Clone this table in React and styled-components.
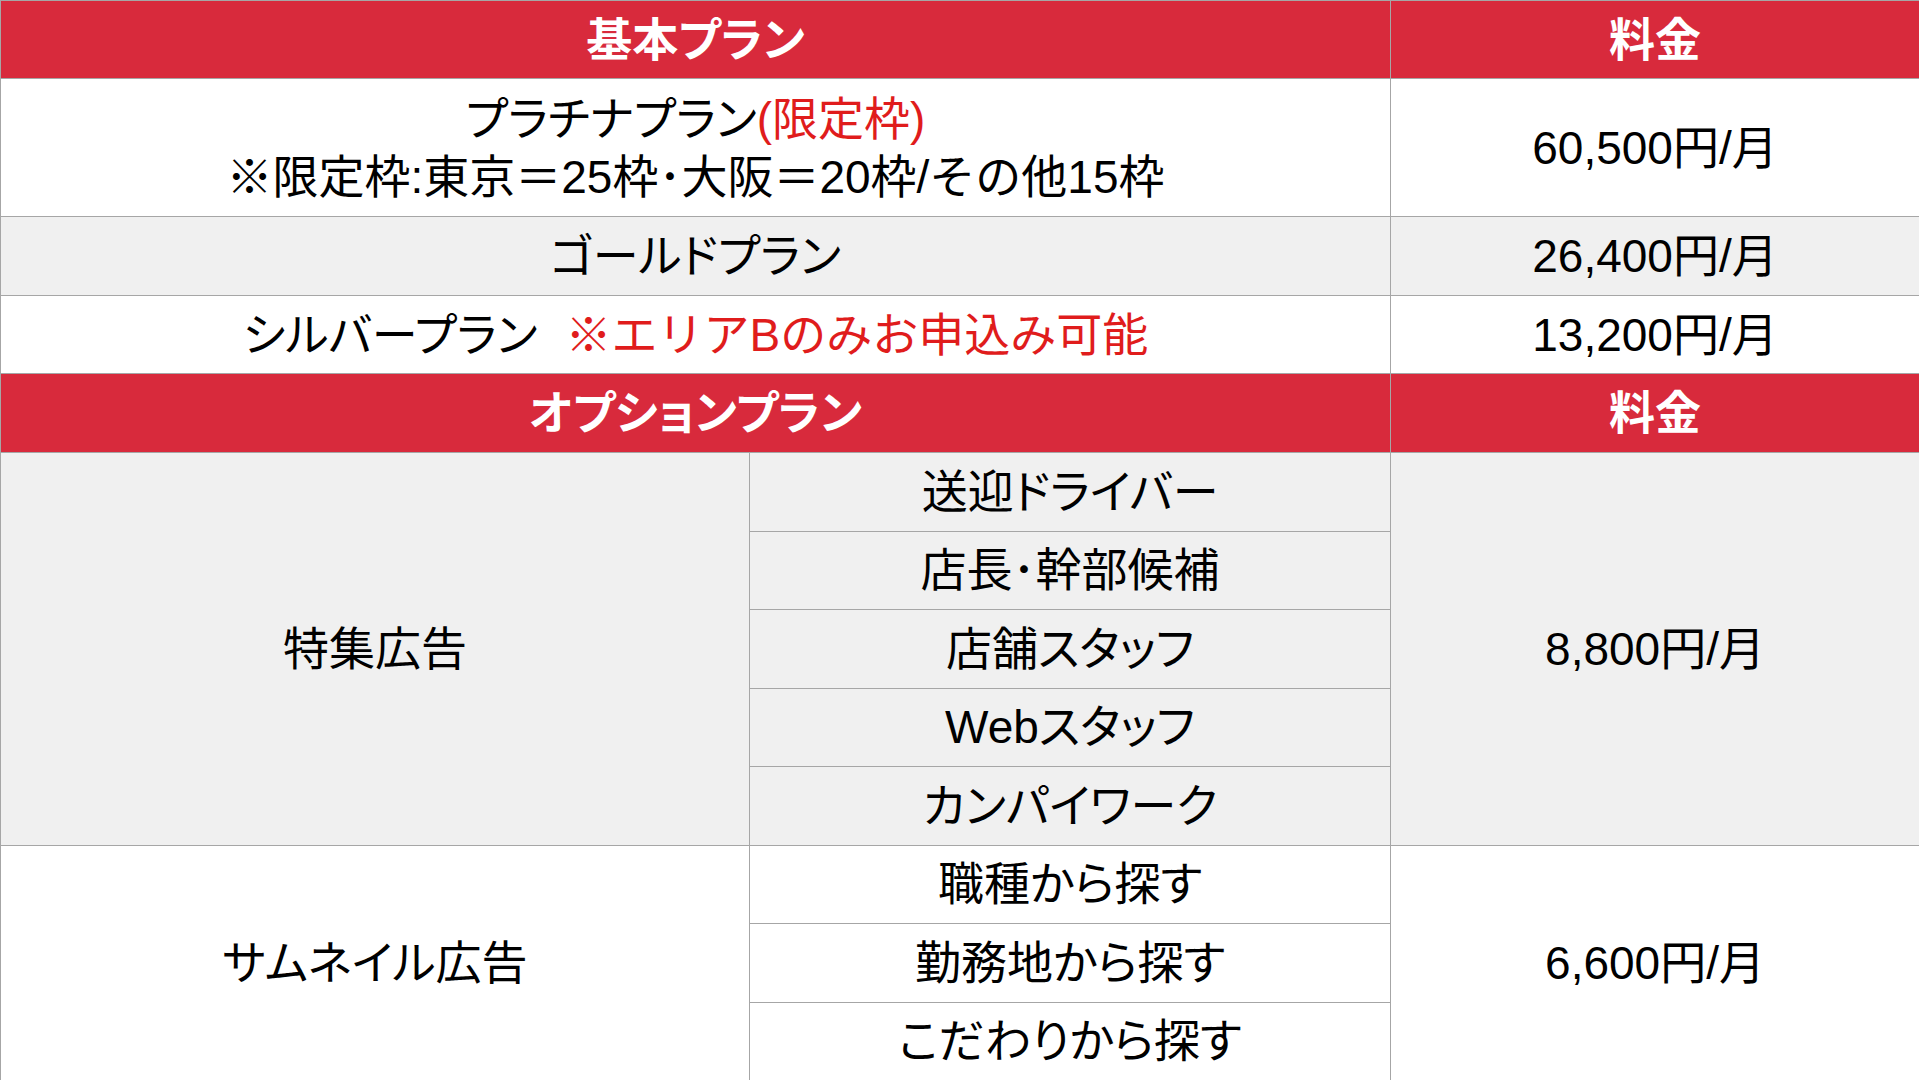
import React from 'react';
import styled, { createGlobalStyle } from 'styled-components';

const GlobalStyle = createGlobalStyle`
  html, body {
    margin: 0;
    padding: 0;
    background: #fff;
  }
  body {
    font-family: "Liberation Sans", "Noto Sans CJK JP", sans-serif;
    overflow: hidden;
  }
`;

const Table = styled.div`
  width: 1919px;
  height: 1080px;
  box-sizing: border-box;
  border-top: 1px solid #a6a6a6;
  border-left: 1px solid #a6a6a6;
  background: #a6a6a6;
  display: grid;
  grid-template-columns: 748px 640px 1fr;
  grid-template-rows: 77px 137px 78px 77px 78px repeat(8, 1fr);
  gap: 1px;
`;

const Cell = styled.div`
  grid-column: ${p => p.$col || 'auto'};
  grid-row: ${p => p.$row || 'auto'};
  background: ${p => (p.$head ? '#d82a3c' : p.$shade ? '#f0f0f0' : '#fff')};
  color: ${p => (p.$head ? '#fff' : '#000')};
  font-weight: ${p => (p.$head ? 700 : 400)};
  font-size: 46px;
  font-feature-settings: "palt";
  display: flex;
  flex-direction: column;
  align-items: center;
  justify-content: center;
  text-align: center;
  line-height: 58px;
  white-space: nowrap;
`;

const Price = styled(Cell)`
  font-feature-settings: normal;
`;

const Line = styled.div`
  font-feature-settings: ${p => (p.$wide ? 'normal' : '"palt"')};
`;

const Red = styled.span`
  color: #e01c1c;
`;

const Note = styled(Red)`
  margin-left: 28px;
  font-feature-settings: normal;
`;

const featureItems = ['送迎ドライバー', '店長･幹部候補', '店舗スタッフ', 'Webスタッフ', 'カンパイワーク'];
const thumbItems = ['職種から探す', '勤務地から探す', 'こだわりから探す'];

export default function App() {
  return (
    <>
      <GlobalStyle />
      <Table>
        <Cell $head $col="1 / 3" $row="1">基本プラン</Cell>
        <Cell $head $col="3" $row="1">料金</Cell>

        <Cell $col="1 / 3" $row="2">
          <Line>
            プラチナプラン<Red>(限定枠)</Red>
          </Line>
          <Line $wide>※限定枠:東京＝25枠･大阪＝20枠/その他15枠</Line>
        </Cell>
        <Price $col="3" $row="2">60,500円/月</Price>

        <Cell $shade $col="1 / 3" $row="3">ゴールドプラン</Cell>
        <Price $shade $col="3" $row="3">26,400円/月</Price>

        <Cell $col="1 / 3" $row="4">
          <Line>
            シルバープラン<Note>※エリアBのみお申込み可能</Note>
          </Line>
        </Cell>
        <Price $col="3" $row="4">13,200円/月</Price>

        <Cell $head $col="1 / 3" $row="5">オプションプラン</Cell>
        <Cell $head $col="3" $row="5">料金</Cell>

        <Cell $shade $col="1" $row="6 / 11">特集広告</Cell>
        {featureItems.map((item, i) => (
          <Cell key={item} $shade $col="2" $row={`${6 + i}`}>
            {item}
          </Cell>
        ))}
        <Price $shade $col="3" $row="6 / 11">8,800円/月</Price>

        <Cell $col="1" $row="11 / 14">サムネイル広告</Cell>
        {thumbItems.map((item, i) => (
          <Cell key={item} $col="2" $row={`${11 + i}`}>
            {item}
          </Cell>
        ))}
        <Price $col="3" $row="11 / 14">6,600円/月</Price>
      </Table>
    </>
  );
}
